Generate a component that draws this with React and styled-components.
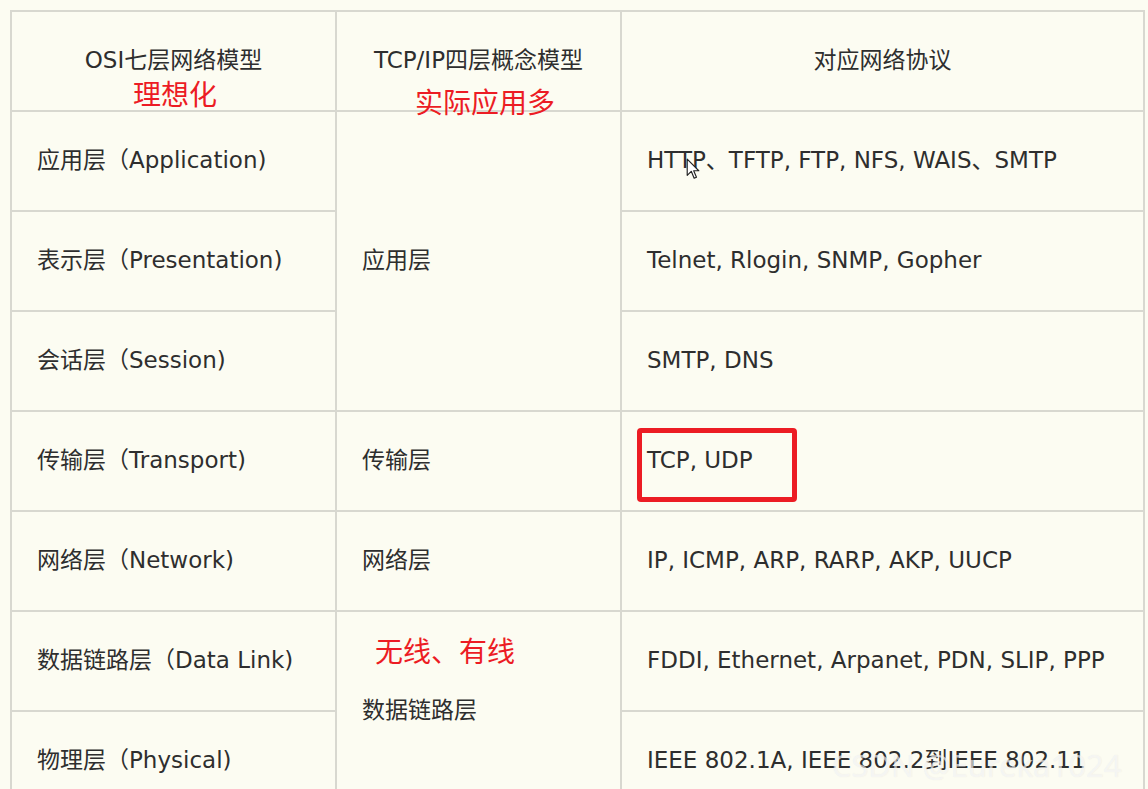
import styled, { createGlobalStyle } from "styled-components";

const GlobalStyle = createGlobalStyle`
  html, body {
    margin: 0;
    padding: 0;
    background: #fcfcf2;
    overflow: hidden;
  }
  body {
    font-family: "DejaVu Sans", "Noto Sans CJK SC", sans-serif;
  }
`;

const rows = [
  { osi: "应用层（Application)", tcp: "应用层", span: 3, proto: "HTTP、TFTP, FTP, NFS, WAIS、SMTP" },
  { osi: "表示层（Presentation)", proto: "Telnet, Rlogin, SNMP, Gopher" },
  { osi: "会话层（Session)", proto: "SMTP, DNS" },
  { osi: "传输层（Transport)", tcp: "传输层", span: 1, proto: "TCP, UDP" },
  { osi: "网络层（Network)", tcp: "网络层", span: 1, proto: "IP, ICMP, ARP, RARP, AKP, UUCP" },
  { osi: "数据链路层（Data Link)", tcp: "数据链路层", span: 2, proto: "FDDI, Ethernet, Arpanet, PDN, SLIP, PPP" },
  { osi: "物理层（Physical)", proto: "IEEE 802.1A, IEEE 802.2到IEEE 802.11" },
];

export default function App() {
  return (
    <Page>
      <GlobalStyle />
      <Table>
        <colgroup>
          <col style={{ width: 325 }} />
          <col style={{ width: 285 }} />
          <col />
        </colgroup>
        <thead>
          <tr>
            <Th>OSI七层网络模型</Th>
            <Th>TCP/IP四层概念模型</Th>
            <Th>对应网络协议</Th>
          </tr>
        </thead>
        <tbody>
          {rows.map((r) => (
            <tr key={r.osi}>
              <Td>{r.osi}</Td>
              {r.tcp && <Td rowSpan={r.span}>{r.tcp}</Td>}
              <Td>{r.proto}</Td>
            </tr>
          ))}
        </tbody>
      </Table>

      <Note $x={133} $y={77}>理想化</Note>
      <Note $x={415} $y={85}>实际应用多</Note>
      <Note $x={375} $y={634}>无线、有线</Note>
      <Highlight />
      <Cursor viewBox="0 0 12 19" width="14" height="22">
        <path d="M1 1 L1 15 L4.5 11.5 L7 17.5 L9 16.6 L6.6 11 L11 11 Z" fill="#fff" stroke="#222" strokeWidth="1" strokeLinejoin="round" />
      </Cursor>
      <Watermark>CSDN @Eureka1024</Watermark>
    </Page>
  );
}

const Page = styled.div`
  position: relative;
  padding: 10px 0 0 10px;
  width: 1148px;
  height: 789px;
  box-sizing: border-box;
  overflow: hidden;
`;

const Table = styled.table`
  width: 1135px;
  border-collapse: collapse;
  table-layout: fixed;
  color: #2e2e2e;
  font-size: 23px;
  line-height: 1.3;
  border: 2px solid #d8d8d0;
`;

const Th = styled.th`
  height: 100px;
  padding: 0 25px;
  font-weight: 400;
  text-align: center;
  vertical-align: middle;
  white-space: nowrap;
  border: 2px solid #d8d8d0;
  box-sizing: border-box;
`;

const Td = styled.td`
  height: 100px;
  padding: 0 25px;
  text-align: left;
  vertical-align: middle;
  white-space: nowrap;
  border: 2px solid #d8d8d0;
  box-sizing: border-box;
`;

const Note = styled.span`
  position: absolute;
  left: ${(p) => p.$x}px;
  top: ${(p) => p.$y}px;
  font-family: "Noto Sans CJK SC", sans-serif;
  color: #ec1c24;
  font-size: 28px;
  line-height: 1.2;
  white-space: nowrap;
`;

const Highlight = styled.div`
  position: absolute;
  left: 637px;
  top: 428px;
  width: 160px;
  height: 74px;
  box-sizing: border-box;
  border: 5px solid #ec1c24;
  border-radius: 4px;
`;

const Cursor = styled.svg`
  position: absolute;
  left: 686px;
  top: 158px;
`;

const Watermark = styled.span`
  position: absolute;
  left: 832px;
  top: 744px;
  font-family: "Noto Sans", sans-serif;
  font-size: 31px;
  color: rgba(255, 255, 255, 0.6);
  text-shadow: 0 0 1px rgba(150, 150, 150, 0.2);
  white-space: nowrap;
  pointer-events: none;
`;
